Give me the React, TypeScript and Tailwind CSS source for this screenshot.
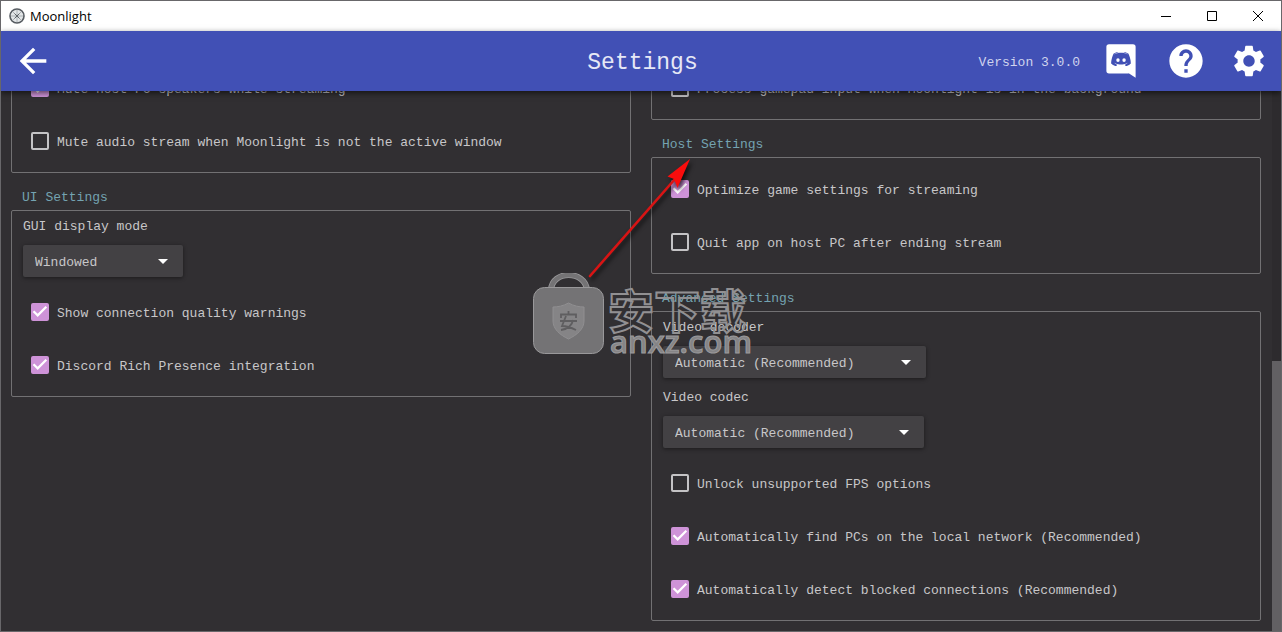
import React, { useId, useState } from 'react';
import { MdArrowBack, MdHelp, MdSettings } from 'react-icons/md';

interface CheckOptionProps {
  label: string;
  defaultChecked?: boolean;
}

interface ComboOptionProps {
  label: string;
  options: string[];
  widthClass: string;
}

function CheckOption({ label, defaultChecked = false }: CheckOptionProps) {
  const [checked, setChecked] = useState(defaultChecked);

  return (
    <label className="flex h-12 items-center gap-2 pl-2">
      <span className="relative flex h-[18px] w-[18px] shrink-0">
        <input
          type="checkbox"
          checked={checked}
          onChange={(e) => setChecked(e.target.checked)}
          className="h-[18px] w-[18px] appearance-none rounded-xs border-2 border-[#c4c3c5] checked:border-[#ce93d8] checked:bg-[#ce93d8]"
        />
        {checked && (
          <svg className="pointer-events-none absolute inset-0" viewBox="0 0 18 18" fill="none" stroke="white" strokeWidth={2.2}>
            <path d="M2.5 8.2L6.7 12.4L15.3 3.8" />
          </svg>
        )}
      </span>
      <span className="whitespace-nowrap pt-[3px]">{label}</span>
    </label>
  );
}

function ComboOption({ label, options, widthClass }: ComboOptionProps) {
  const id = useId();

  return (
    <>
      <label htmlFor={id} className="h-4">
        {label}
      </label>
      <div className={`relative my-1.5 h-8 ${widthClass}`}>
        <select
          id={id}
          className="h-8 w-full appearance-none rounded-xs bg-[#434144] pl-3 pr-8 pt-[3px] shadow-[0_1px_4px_rgba(0,0,0,0.45)]"
        >
          {options.map((option) => (
            <option key={option}>{option}</option>
          ))}
        </select>
        <svg className="pointer-events-none absolute right-[15px] top-[14px] h-[5px] w-[10px]" viewBox="0 0 10 5" fill="white">
          <path d="M0 0H10L5 5Z" />
        </svg>
      </div>
    </>
  );
}

function GroupTitle({ children }: { children: React.ReactNode }) {
  return <h2 className="mt-4 mb-[5px] h-4 pl-[11px] text-[#74a3b1]">{children}</h2>;
}

function GroupBox({ children }: { children: React.ReactNode }) {
  return (
    <div className="flex flex-col gap-[5px] rounded-xs border border-[#727173] px-[11px] py-[7px]">
      {children}
    </div>
  );
}

function TitleBar() {
  return (
    <div className="flex h-[30px] shrink-0 items-center bg-white pl-2 text-black">
      <svg className="h-4 w-4" viewBox="0 0 16 16" fill="none">
        <circle cx="8" cy="8" r="7" fill="#e3e6e8" stroke="#565b61" strokeWidth="1.6" />
        <path d="M8 2V14M2 8H14M3.8 3.8L12.2 12.2M12.2 3.8L3.8 12.2" stroke="#a0a5aa" strokeWidth="0.8" />
        <path d="M5.600 5.600L10.400 10.400M10.400 5.600L5.600 10.400" stroke="#565b61" strokeWidth="0.9" />
      </svg>
      <span className="ml-[5px] flex-1 font-['Open_Sans',sans-serif] text-[13px]">Moonlight</span>
      <button aria-label="Minimize" className="flex h-full w-[46px] items-center justify-center">
        <svg className="h-[10px] w-[10px]" viewBox="0 0 10 10" stroke="black">
          <path d="M0 5.5H10" />
        </svg>
      </button>
      <button aria-label="Maximize" className="flex h-full w-[46px] items-center justify-center">
        <svg className="h-[10px] w-[10px]" viewBox="0 0 10 10" fill="none" stroke="black">
          <path d="M0.5 0.5H9.5V9.5H0.5Z" />
        </svg>
      </button>
      <button aria-label="Close" className="flex h-full w-[46px] items-center justify-center">
        <svg className="h-[10px] w-[10px]" viewBox="0 0 10 10" stroke="black">
          <path d="M0 0L10 10M10 0L0 10" />
        </svg>
      </button>
    </div>
  );
}

function ToolBar() {
  return (
    <header className="relative z-10 grid h-[60px] shrink-0 grid-cols-3 items-center bg-[#4150b5] pl-4 pr-[13px] text-white shadow-[0_2px_6px_rgba(0,0,0,0.6)]">
      <button aria-label="Back" className="justify-self-start">
        <MdArrowBack className="h-8 w-8 scale-125" />
      </button>
      <h1 className="justify-self-center pt-[3px] text-[23px] text-[#e6e8f6]">Settings</h1>
      <div className="flex items-center justify-self-end">
        <span className="mr-[22px] whitespace-nowrap pt-[3px] text-[#d0d4ee]">Version 3.0.0</span>
        <a href="#discord" aria-label="Discord" className="mr-[26px]">
          <svg className="h-[38px] w-[38px]" viewBox="-1 -0.5 26 26" fill="currentColor">
            <path
              fillRule="evenodd"
              d="M22 24L16.75 20.6L17.38 21H3.8A1.8 1.8 0 0 1 2 19.2V2.8A1.8 1.8 0 0 1 3.8 1H20.2A1.8 1.8 0 0 1 22 2.8V24M12 6.8C9.32 6.8 7.44 7.95 7.44 7.95C8.47 7.03 10.27 6.5 10.27 6.5L10.1 6.33C8.41 6.36 6.88 7.53 6.88 7.53C5.16 11.12 5.27 14.22 5.27 14.22C6.67 16.03 8.75 15.9 8.75 15.9L9.46 15C8.21 14.73 7.42 13.62 7.42 13.62C7.42 13.62 9.3 14.9 12 14.9C14.7 14.9 16.58 13.62 16.58 13.62C16.58 13.62 15.79 14.73 14.54 15L15.25 15.9C15.25 15.9 17.33 16.03 18.73 14.22C18.73 14.22 18.84 11.12 17.12 7.53C17.12 7.53 15.59 6.36 13.9 6.33L13.73 6.5C13.73 6.5 15.53 7.03 16.56 7.95C16.56 7.95 14.68 6.8 12 6.8Z"
            />
            <ellipse cx="9.93" cy="11.86" rx="1.17" ry="1.27" />
            <ellipse cx="14.1" cy="11.86" rx="1.17" ry="1.27" />
          </svg>
        </a>
        <a href="#help" aria-label="Help" className="mr-6">
          <MdHelp className="h-10 w-10" />
        </a>
        <button aria-label="Settings">
          <MdSettings className="h-[38px] w-[38px]" />
        </button>
      </div>
    </header>
  );
}

function Arrow() {
  return (
    <svg
      className="pointer-events-none absolute left-[579px] top-[149px] z-20 h-[140px] w-[130px] drop-shadow-[2px_3px_2px_rgba(0,0,0,0.7)]"
      viewBox="580 150 130 140"
    >
      <path d="M590 276L675 179" stroke="#d81414" strokeWidth="2.6" strokeLinecap="round" />
      <path d="M690 159L667.5 176.5L674 179L677.5 188Z" fill="#f90d0d" />
    </svg>
  );
}

function Watermark() {
  return (
    <div className="pointer-events-none absolute left-[531px] top-[272px] z-20 flex items-end gap-1">
      <svg className="h-[82px] w-[72px]" viewBox="532 273 72 82">
        <path d="M551 290C552 270 585 270 587 290" fill="none" stroke="#99989a" strokeWidth="6" />
        <path d="M551 290C552 270 585 270 587 290" fill="none" stroke="#747375" strokeWidth="4.4" />
        <rect x="533.5" y="287.5" width="70" height="66" rx="11" fill="#747375" stroke="#99989a" />
        <path d="M568.5 303C574 306 579 307 584 307V321C584 329 577 335 568.5 339C560 335 553 329 553 321V307C558 307 563 306 568.5 303Z" fill="#858486" stroke="#908f91" />
        <g fill="none" stroke="#5f5e60" strokeWidth="1.8">
          <path d="M568.5 311V314M561 318V314.500H576V318M560 321H577M566 316L562 326C567 326 572 328 576 330M573 320C572 326 567 329 561 330" />
        </g>
      </svg>
      <div className="flex flex-col">
        <span className="font-['Noto_Sans_CJK_SC',sans-serif] text-[46px] font-bold leading-[38px] text-transparent [-webkit-text-stroke:2px_#919092]">
          安下载
        </span>
        <span className="pl-0.5 font-['Open_Sans',sans-serif] text-[31px] font-semibold leading-7 text-[#858486] [-webkit-text-stroke:1px_#9c9b9d]">
          anxz.com
        </span>
      </div>
    </div>
  );
}

export default function App() {
  return (
    <div className="relative flex h-screen flex-col overflow-hidden border border-[#68676a] bg-[#312f32] font-['Liberation_Mono',monospace] text-[13px] leading-[18px] text-[#c8c7c9]">
      <TitleBar />
      <ToolBar />

      <div className="relative min-h-0 flex-1 overflow-hidden">
        {/* Page is scrolled down, so the first groups start above the tool bar edge */}
        <main className="-mt-[35px] grid grid-cols-2">
          <div className="px-[10px]">
            <GroupBox>
              <CheckOption label="Mute host PC speakers while streaming" defaultChecked />
              <CheckOption label="Mute audio stream when Moonlight is not the active window" />
            </GroupBox>

            <GroupTitle>UI Settings</GroupTitle>
            <GroupBox>
              <ComboOption label="GUI display mode" options={['Windowed']} widthClass="w-40" />
              <CheckOption label="Show connection quality warnings" defaultChecked />
              <CheckOption label="Discord Rich Presence integration" defaultChecked />
            </GroupBox>
          </div>

          <div className="pl-[10px] pr-5">
            <GroupBox>
              <CheckOption label="Process gamepad input when Moonlight is in the background" />
            </GroupBox>

            <GroupTitle>Host Settings</GroupTitle>
            <GroupBox>
              <CheckOption label="Optimize game settings for streaming" defaultChecked />
              <CheckOption label="Quit app on host PC after ending stream" />
            </GroupBox>

            <GroupTitle>Advanced Settings</GroupTitle>
            <GroupBox>
              <ComboOption label="Video decoder" options={['Automatic (Recommended)']} widthClass="w-[263px]" />
              <ComboOption label="Video codec" options={['Automatic (Recommended)']} widthClass="w-[261px]" />
              <CheckOption label="Unlock unsupported FPS options" />
              <CheckOption label="Automatically find PCs on the local network (Recommended)" defaultChecked />
              <CheckOption label="Automatically detect blocked connections (Recommended)" defaultChecked />
            </GroupBox>
          </div>
        </main>

        {/* Scroll bar */}
        <div className="absolute inset-y-0 right-0 flex w-[9px] flex-col justify-end bg-[#2d2b2e]">
          <div className="h-1/2 bg-[#626063]" />
        </div>
      </div>

      <Arrow />
      <Watermark />
    </div>
  );
}
